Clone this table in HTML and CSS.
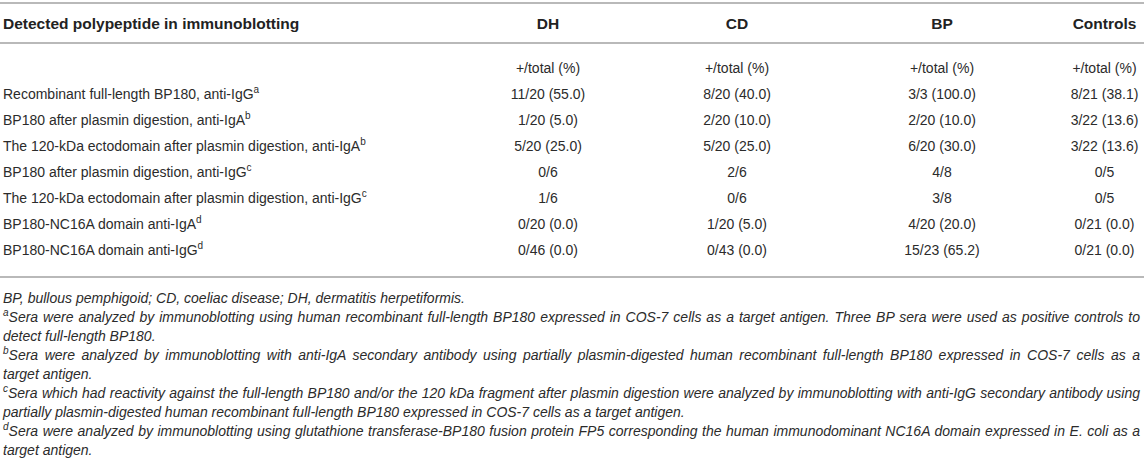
FILE: index.html
```html
<!DOCTYPE html>
<html lang="en">
    <head>
        <meta charset="utf-8">
        <title>Table - Immunoblotting</title>
        <link rel="stylesheet" href="styles.css">
    </head>
    <body>
        <div class="table_wrap">
            <table class="data">
                <colgroup>
                    <col class="c_name">
                    <col class="c_dh">
                    <col class="c_cd">
                    <col class="c_bp">
                    <col class="c_ctrl">
                </colgroup>
                <thead>
                    <tr>
                        <th>Detected polypeptide in immunoblotting</th>
                        <th>DH</th>
                        <th>CD</th>
                        <th>BP</th>
                        <th>Controls</th>
                    </tr>
                </thead>
                <tbody>
                    <tr class="first">
                        <td></td>
                        <td>+/total (%)</td>
                        <td>+/total (%)</td>
                        <td>+/total (%)</td>
                        <td>+/total (%)</td>
                    </tr>
                    <tr>
                        <td>Recombinant full-length BP180, anti-IgG<sup>a</sup></td>
                        <td>11/20 (55.0)</td>
                        <td>8/20 (40.0)</td>
                        <td>3/3 (100.0)</td>
                        <td>8/21 (38.1)</td>
                    </tr>
                    <tr>
                        <td>BP180 after plasmin digestion, anti-IgA<sup>b</sup></td>
                        <td>1/20 (5.0)</td>
                        <td>2/20 (10.0)</td>
                        <td>2/20 (10.0)</td>
                        <td>3/22 (13.6)</td>
                    </tr>
                    <tr>
                        <td>The 120-kDa ectodomain after plasmin digestion, anti-IgA<sup>b</sup></td>
                        <td>5/20 (25.0)</td>
                        <td>5/20 (25.0)</td>
                        <td>6/20 (30.0)</td>
                        <td>3/22 (13.6)</td>
                    </tr>
                    <tr>
                        <td>BP180 after plasmin digestion, anti-IgG<sup>c</sup></td>
                        <td>0/6</td>
                        <td>2/6</td>
                        <td>4/8</td>
                        <td>0/5</td>
                    </tr>
                    <tr>
                        <td>The 120-kDa ectodomain after plasmin digestion, anti-IgG<sup>c</sup></td>
                        <td>1/6</td>
                        <td>0/6</td>
                        <td>3/8</td>
                        <td>0/5</td>
                    </tr>
                    <tr>
                        <td>BP180-NC16A domain anti-IgA<sup>d</sup></td>
                        <td>0/20 (0.0)</td>
                        <td>1/20 (5.0)</td>
                        <td>4/20 (20.0)</td>
                        <td>0/21 (0.0)</td>
                    </tr>
                    <tr class="last">
                        <td>BP180-NC16A domain anti-IgG<sup>d</sup></td>
                        <td>0/46 (0.0)</td>
                        <td>0/43 (0.0)</td>
                        <td>15/23 (65.2)</td>
                        <td>0/21 (0.0)</td>
                    </tr>
                </tbody>
            </table>
        </div>
        <div class="notes">
            <p>BP, bullous pemphigoid; CD, coeliac disease; DH, dermatitis herpetiformis.</p>
            <p>
                <span class="line full"><sup>a</sup>Sera were analyzed by immunoblotting using human recombinant full-length BP180 expressed in COS-7 cells as a target antigen. Three BP sera were used as positive controls to</span>
                <span class="line">detect full-length BP180.</span>
            </p>
            <p>
                <span class="line full"><sup>b</sup>Sera were analyzed by immunoblotting with anti-IgA secondary antibody using partially plasmin-digested human recombinant full-length BP180 expressed in COS-7 cells as a</span>
                <span class="line">target antigen.</span>
            </p>
            <p>
                <span class="line full"><sup>c</sup>Sera which had reactivity against the full-length BP180 and/or the 120 kDa fragment after plasmin digestion were analyzed by immunoblotting with anti-IgG secondary antibody using</span>
                <span class="line">partially plasmin-digested human recombinant full-length BP180 expressed in COS-7 cells as a target antigen.</span>
            </p>
            <p>
                <span class="line full"><sup>d</sup>Sera were analyzed by immunoblotting using glutathione transferase-BP180 fusion protein FP5 corresponding the human immunodominant NC16A domain expressed in E. coli as a</span>
                <span class="line">target antigen.</span>
            </p>
        </div>
    </body>
</html>
```

FILE: styles.css
```css
body {
    font-family: "Liberation Sans", Arial, sans-serif;
    color: #2b2b2b;
    background-color: white;
    margin: 0;
}
.table_wrap {
    padding-top: 2px;
}
.data {
    width: 100%;
    border-collapse: collapse;
    table-layout: fixed;
    font-size: 14px;
}
.c_name {
    width: 445px;
}
.c_dh {
    width: 206px;
}
.c_cd {
    width: 172px;
}
.c_bp {
    width: 238px;
}
.data thead tr {
    border-top: 2px solid #b9b9b9;
    border-bottom: 2px solid #b9b9b9;
}
.data th {
    font-size: 15.5px;
    line-height: 17px;
    font-weight: bold;
    text-align: center;
    padding: 11px 4px 10px 4px;
    color: #222;
}
.data th:first-child {
    text-align: left;
    padding-left: 3px;
}
.data td {
    text-align: center;
    padding: 4px 4px;
    line-height: 18px;
    white-space: nowrap;
}
.data td:first-child {
    text-align: left;
    padding-left: 3px;
}
.data th:last-child, .data td:last-child {
    padding-right: 0;
}
.data tr.first td {
    padding-top: 15px;
}
.data tr.last {
    border-bottom: 2px solid #b9b9b9;
}
.data tr.last td {
    padding-bottom: 17px;
}
sup {
    font-size: 10px;
    line-height: 0;
}
.notes {
    padding: 11px 4px 0 3px;
    font-size: 14px;
    font-style: italic;
    line-height: 19px;
}
.notes p {
    margin: 0;
}
.line {
    display: block;
}
.line.full {
    text-align: justify;
    text-align-last: justify;
}
```
